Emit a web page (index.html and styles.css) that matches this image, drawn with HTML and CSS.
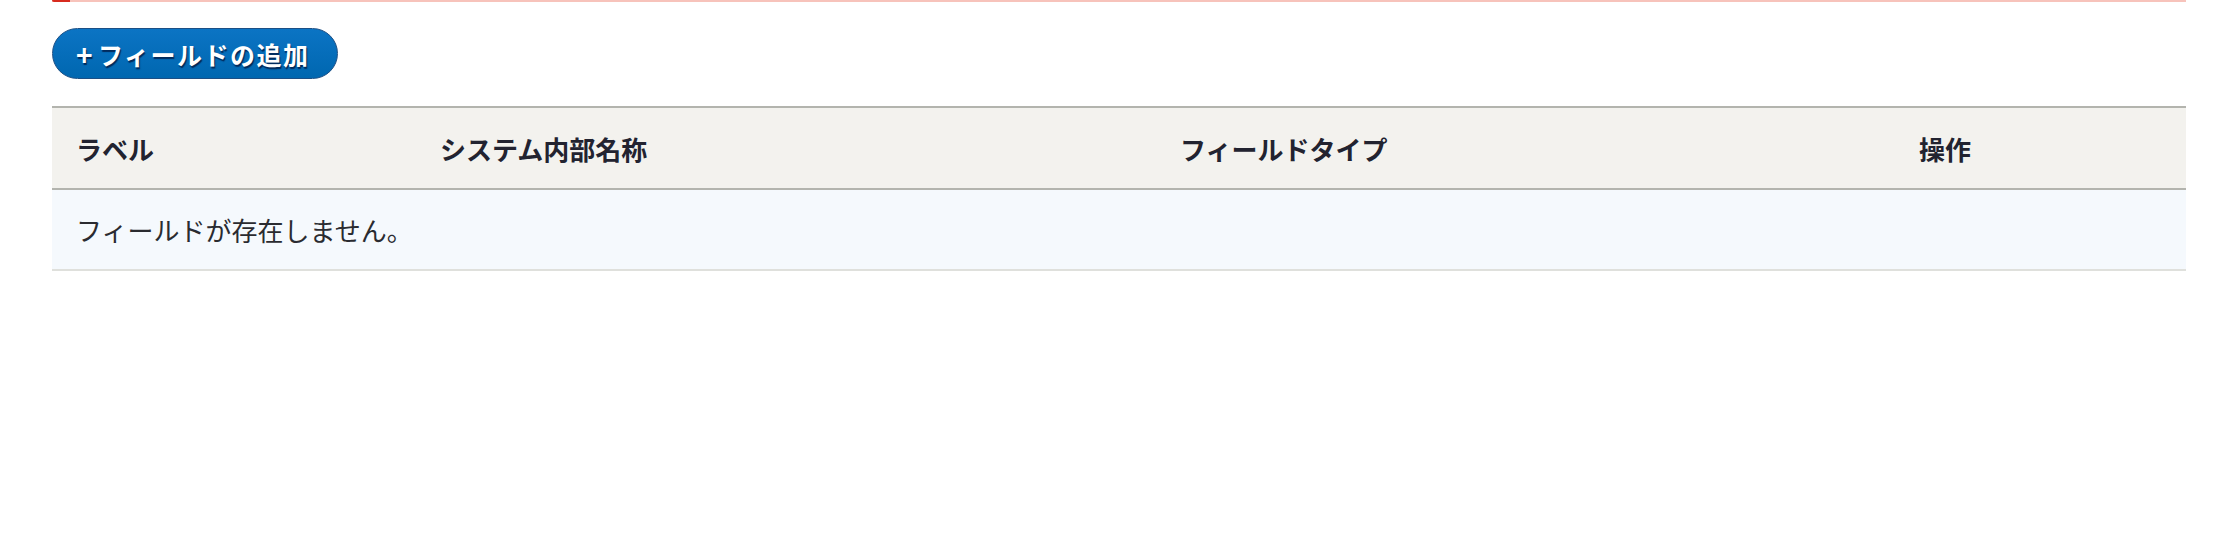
FILE: index.html
```html
<!DOCTYPE html>
<html lang="ja">
<head>
<meta charset="utf-8">
<title>フィールドの管理</title>
<link rel="stylesheet" href="styles.css">
</head>
<body>
<div class="page">
  <div class="message-edge"><span class="message-edge__accent"></span></div>
  <div class="actions">
    <a class="button" href="#"><span class="button__plus">+</span>フィールドの追加</a>
  </div>
  <table class="field-table">
    <colgroup>
      <col class="col-label">
      <col class="col-machine">
      <col class="col-type">
      <col class="col-ops">
    </colgroup>
    <thead>
      <tr>
        <th>ラベル</th>
        <th>システム内部名称</th>
        <th>フィールドタイプ</th>
        <th>操作</th>
      </tr>
    </thead>
    <tbody>
      <tr>
        <td colspan="4">フィールドが存在しません。</td>
      </tr>
    </tbody>
  </table>
</div>
</body>
</html>
```

FILE: styles.css
```css
html, body {
  margin: 0;
  padding: 0;
  background: #ffffff;
}

body {
  font-family: "Noto Sans CJK JP", "Noto Sans", sans-serif;
  color: #232429;
}

.page {
  padding: 0 40px 0 52px;
}

.message-edge {
  display: flex;
  height: 2px;
  background: #f7c3bb;
}

.message-edge__accent {
  width: 18px;
  background: #d72b1f;
  border-bottom-left-radius: 2px;
}

.actions {
  display: flex;
  padding-top: 26px;
  padding-bottom: 27px;
}

.button {
  display: inline-flex;
  align-items: center;
  height: 49px;
  padding: 0 27px 0 23px;
  border: 1px solid #1c4f85;
  border-radius: 26px;
  background: linear-gradient(#0b74c4, #0067b0);
  color: #ffffff;
  font-size: 25px;
  font-weight: 700;
  letter-spacing: 1.5px;
  text-decoration: none;
  text-shadow: 1px 2px 1px rgba(0, 20, 60, 0.75);
}

.button__plus {
  margin-right: 4px;
  font-size: 28px;
}

.field-table {
  width: 100%;
  border-collapse: collapse;
  table-layout: fixed;
}

.col-label { width: 364px; }
.col-machine { width: 740px; }
.col-type { width: 739px; }
.col-ops { width: 291px; }

.field-table th {
  height: 80px;
  padding: 0 24px;
  text-align: left;
  font-size: 26px;
  font-weight: 700;
  color: #222330;
  background: #f3f2ee;
  border-top: 2px solid #b3b4ae;
  border-bottom: 2px solid #b3b4ae;
}

.field-table td {
  height: 79px;
  padding: 0 24px;
  font-size: 26px;
  color: #2a2b30;
  background: #f5f9fd;
  border-bottom: 2px solid #dfe0dc;
}
```
